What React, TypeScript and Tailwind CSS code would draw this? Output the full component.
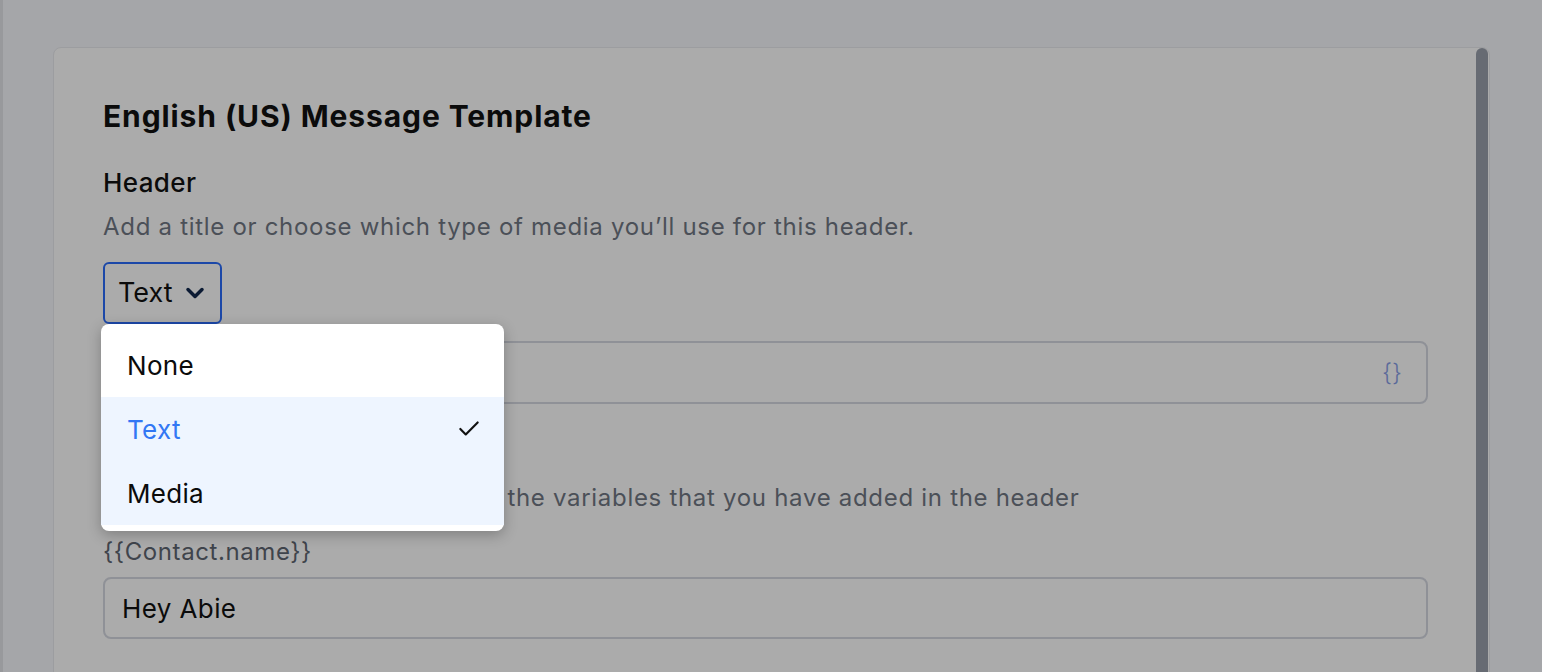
import { Check, ChevronDown } from "lucide-react";

const options = ["None", "Text", "Media"];

export default function App() {
  return (
    <div
      className="h-[672px] w-full overflow-hidden bg-[#a5a6a9] border-l-[3px] border-[#98999c] pl-[50px] pt-[47px]"
      style={{ fontFamily: "Inter, 'Noto Sans', sans-serif" }}
    >
      <div className="relative h-[700px] w-[1437px] rounded-t-lg border border-[#9c9da0] bg-[#ababab] pl-[49px] pt-[50px]">
        <div className="absolute right-[1px] top-0 bottom-0 w-[12px] rounded-full bg-[#676b73]" />

        <h1 className="text-[30px] leading-9 font-bold text-[#0b0b0b] tracking-[0.9px]">
          English (US) Message Template
        </h1>

        <div className="mt-[33px] text-[26px] leading-8 font-medium text-[#0b0b0b] tracking-[0.4px]">Header</div>
        <p className="mt-[13px] text-[24px] leading-[30px] text-[#4b5058] tracking-[0.7px]">
          Add a title or choose which type of media you’ll use for this header.
        </p>

        <div className="relative mt-[20px]">
          <button className="flex h-[62px] w-[119px] items-center gap-[8px] rounded-md border-2 border-[#1c48a8] pl-[13px] text-[27px] text-[#0b0b0b]">
            Text
            <ChevronDown className="h-[28px] w-[28px] text-[#0b1a33]" strokeWidth={3} />
          </button>

          <div className="absolute left-[-2px] top-[62px] z-10 w-[403px] rounded-lg bg-white pt-[9px] pb-[6px] shadow-[0_4px_14px_rgba(0,0,0,0.25)]">
            {options.map((o) => (
              <div
                key={o}
                className={`flex h-[64px] items-center justify-between pl-[26px] pr-[22px] text-[26px] tracking-[0.3px] ${
                  o === "None" ? "" : "bg-[#eef5ff]"
                } ${o === "Text" ? "text-[#3277f4]" : "text-[#0b0b0b]"}`}
              >
                {o}
                {o === "Text" && <Check className="h-[26px] w-[26px] text-[#111]" strokeWidth={2} />}
              </div>
            ))}
          </div>
        </div>

        <div className="mt-[17px] flex h-[63px] w-[1325px] items-center justify-end rounded-lg border-2 border-[#8f9197] pr-[24px]">
          <span className="text-[24px] font-light text-[#5b6a9a]">{"{}"}</span>
        </div>

        <div className="mt-[34px] text-[26px] leading-8 font-medium text-[#0b0b0b] tracking-[0.4px]">Body</div>
        <p className="mt-[13px] text-[24px] leading-[30px] text-[#4b5058] tracking-[0.7px]">
          Please provide sample values for the variables that you have added in the header
        </p>

        <div className="mt-[24px] text-[24px] leading-[30px] text-[#3f444c] tracking-[0.6px]">{"{{Contact.name}}"}</div>
        <div className="mt-[10px] flex h-[62px] w-[1325px] items-center rounded-lg border-2 border-[#8f9197] pl-[17px] text-[26px] tracking-[0.4px] text-[#0b0b0b]">
          Hey Abie
        </div>
      </div>
    </div>
  );
}
